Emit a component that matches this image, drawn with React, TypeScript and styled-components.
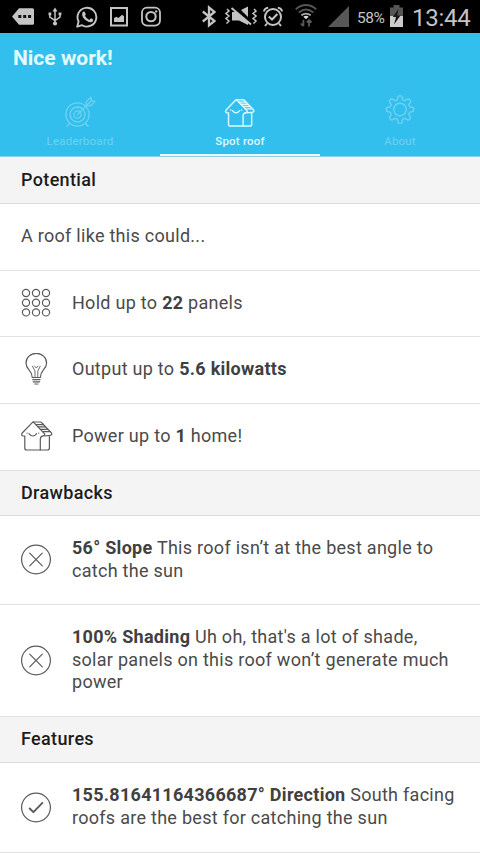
import React from "react";
import styled, { createGlobalStyle } from "styled-components";

const GlobalStyle = createGlobalStyle`
  * { box-sizing: border-box; }
  body { margin: 0; background: #fff; overflow: hidden; }
`;

const Screen = styled.div`
  width: 480px;
  height: 854px;
  overflow: hidden;
  background: #fff;
  font-family: Roboto, "Liberation Sans", sans-serif;
  color: #4a4a4a;
`;

const StatusBar = styled.div`
  display: flex;
  align-items: center;
  height: 33px;
  background: #000;
  color: #c4c4c4;
`;

const StatusIcon = styled.svg<{ $gap: number }>`
  flex: none;
  display: block;
  margin-left: ${(p) => p.$gap}px;
`;

const Battery = styled.span`
  width: 30px;
  margin-left: 8px;
  font-size: 15.5px;
  letter-spacing: -0.4px;
  white-space: nowrap;
  padding-top: 2px;
`;

const Clock = styled.span`
  margin-left: 9px;
  font-size: 24px;
  letter-spacing: -0.25px;
  padding-top: 3px;
`;

const AppBar = styled.header`
  display: flex;
  flex-direction: column;
  height: 124px;
  background: #33bfed;
  border-bottom: 1px solid #8fcfe6;
`;

const Title = styled.h1`
  margin: 0;
  padding: 13px 13px 0;
  height: 57px;
  font-size: 21px;
  line-height: 25px;
  font-weight: 700;
  color: #e2fbfd;
`;

const Tabs = styled.nav`
  display: grid;
  grid-template-columns: repeat(3, 1fr);
  flex: 1;
`;

const Tab = styled.div<{ $active?: boolean }>`
  display: flex;
  flex-direction: column;
  align-items: center;
  color: ${(p) => (p.$active ? "#dcfcff" : "#6ed2f0")};
  font-weight: ${(p) => (p.$active ? 500 : 400)};
  border-bottom: 2px solid ${(p) => (p.$active ? "#e4fcff" : "transparent")};
`;

const TabIcon = styled.svg`
  display: block;
  width: 32px;
  height: 36px;
  margin-top: 3px;
  fill: none;
  stroke: currentColor;
  stroke-linejoin: round;
  stroke-linecap: round;
`;

const TabLabel = styled.span`
  margin-top: 5px;
  font-size: 11.5px;
  line-height: 14px;
  letter-spacing: 0.2px;
`;

const SectionHeader = styled.h2<{ $height: number }>`
  display: flex;
  align-items: center;
  height: ${(p) => p.$height}px;
  margin: 0;
  padding: 0 21px 2px;
  background: #f4f4f4;
  border-bottom: 1px solid #dcdcdc;
  font-size: 18px;
  letter-spacing: 0.35px;
  font-weight: 500;
  color: #1c1c1c;
`;

const Row = styled.div<{ $height: number }>`
  display: flex;
  align-items: center;
  height: ${(p) => p.$height}px;
  padding: 0 20px 0 21px;
  border-bottom: 1.5px solid #e2e2e2;
`;

const RowIcon = styled.svg`
  flex: none;
  width: 32px;
  height: 32px;
  margin: 0 19px 2px 0;
  fill: none;
  stroke: #5a5a5a;
  stroke-width: 1.2;
  stroke-linejoin: round;
  stroke-linecap: round;
`;

const RowText = styled.p`
  margin: 0;
  padding-bottom: 1px;
  font-size: 18px;
  line-height: 22.7px;
  letter-spacing: 0.28px;
  white-space: nowrap;

  b {
    font-weight: 700;
    color: #404040;
  }
`;

const House = () => (
  <g>
    <path d="M3.8 15H2.2Q-.2 14.4 1.2 12L11 1.8Q12 .8 13.2 1H19.2Q20.2 1 21 2L30.4 11.8Q31.4 14 29.2 14.4L23.6 15M28.4 14.8V27Q28.4 29 26.4 29H5.8Q3.8 29 3.8 27V15" />
    <path d="M12.5 1.2 23.4 12.6Q24.6 14.4 22 14.8 19.3 15.4 19.3 18V29" />
    <path d="M14.8 3.6H22.2M17 5.9H24.4M19.3 8.3H26.7M21.5 10.7H29" />
    <path d="M8 12.6Q11.8 17.4 15.6 12.6M6 12h.2M17.6 12h.2" />
  </g>
);

const HouseIcon = () => (
  <RowIcon viewBox="0 -1 32 32"><House /></RowIcon>
);

const PanelsIcon = () => (
  <RowIcon viewBox="0 0 32 32">
    {[6, 15.7, 25.4].map((y) =>
      [5, 15, 25].map((x) => <circle key={`${x}-${y}`} cx={x} cy={y} r="3.6" />)
    )}
  </RowIcon>
);

const BulbIcon = () => (
  <RowIcon viewBox="0 0 32 32">
    <path d="M11.3 24.5Q11.3 20.5 8 16.8Q5 13.4 5 10A10.3 9.7 0 0 1 25.6 10Q25.6 13.4 22.4 16.8Q19.3 20.5 19.3 24.5Z" />
    <path d="M14 24V18L11.5 13.3M16.8 24V18L19.2 13.3M13.5 13l1.8 2 1.8-2" strokeWidth=".9" />
    <path d="M11.8 26.7H19M12.2 28.9H18.6M13.8 31H17" />
  </RowIcon>
);

const CrossIcon = () => (
  <RowIcon viewBox="0 0 32 32">
    <circle cx="15" cy="16.5" r="14.4" />
    <path d="m8.7 10.2 12.6 12.6m0-12.6L8.7 22.8" />
  </RowIcon>
);

const CheckIcon = () => (
  <RowIcon viewBox="0 0 32 32">
    <circle cx="15" cy="16.5" r="14.4" />
    <path d="m8.7 17.5 3.7 3.7 9-9.3" strokeWidth="1.9" />
  </RowIcon>
);

const StatusIcons = () => (
  <>
    <StatusIcon $gap={12} width="22" height="33" viewBox="0 0 22 33" fill="currentColor">
      <path d="M7 8.2H20.5Q22 8.2 22 9.7V23.3Q22 24.8 20.5 24.8H7L0 16.5Z" />
      <path d="M6.3 15h3v3h-3zM11.2 15h3v3h-3zM16.1 15h3v3h-3z" fill="#111" />
    </StatusIcon>
    <StatusIcon $gap={14} width="14" height="33" viewBox="0 0 14 33" fill="none" stroke="currentColor" strokeWidth="1.5">
      <path d="M7 10V23M1.8 14V17.2L7 20.5 12 17V14" />
      <path d="M7 7.5 9.5 11.5H4.5ZM.5 12.5H3.3V15.3H.5ZM10.6 12.5H13.4V15.3H10.6Z" fill="currentColor" stroke="none" />
      <circle cx="7" cy="23.5" r="2.1" fill="currentColor" stroke="none" />
    </StatusIcon>
    <StatusIcon $gap={14} width="22" height="33" viewBox="0 0 22 33" fill="none" stroke="currentColor" strokeWidth="1.9">
      <path d="M1.2 26.7 2.6 21.5A9.4 9.4 0 1 1 6.1 25.2Z" strokeLinejoin="round" />
      <path d="M6.4 12.4Q7.5 10.8 8.7 11.8L9.8 14.2Q9.8 15 8.9 15.8 10.5 18.7 13.3 19.9L14.6 18.4Q15.3 18.2 17.1 19.5 17.7 20.5 16.1 22 14 23 10.5 20.8 5.1 17.2 6.4 12.4Z" fill="currentColor" stroke="none" />
    </StatusIcon>
    <StatusIcon $gap={12} width="18" height="33" viewBox="0 0 18 33" fill="none" stroke="currentColor" strokeWidth="2">
      <path d="M1 8H17V25.5H1Z" />
      <path d="M4 22V18L6.5 16.8 8.3 18 12.2 14.7 14 16.2V22Z" fill="currentColor" stroke="none" />
    </StatusIcon>
    <StatusIcon $gap={13} width="20" height="33" viewBox="0 0 20 33" fill="none" stroke="currentColor" strokeWidth="1.8">
      <rect x="1" y="7.6" width="18" height="18" rx="5" />
      <circle cx="10" cy="16.6" r="4.7" strokeWidth="2" />
      <circle cx="15.2" cy="11.4" r="1.2" fill="currentColor" stroke="none" />
    </StatusIcon>
    <StatusIcon $gap={41} width="14" height="33" viewBox="0 0 14 33" fill="none" stroke="currentColor" strokeWidth="2.3">
      <path d="M.8 11.5 12.5 21 7 25.4V7.4L12.5 12 .8 21.5" />
    </StatusIcon>
    <StatusIcon $gap={9} width="32" height="33" viewBox="0 0 32 33" fill="none" stroke="currentColor" strokeWidth="1.5">
      <path d="m2 9 2 2-3 2.5L4 16l-3 2.5L4 21l-2.5 2.5M29 9l2 2-3 2.5 3 2.5-3 2.5 3 2.5-2.5 2.5" />
      <path d="M7 12H12L23 22V25L14 20.5H7ZM16 10 23 6.5V17Z" fill="currentColor" stroke="none" />
      <path d="M6.5 8 26 24.5" strokeWidth="2" />
    </StatusIcon>
    <StatusIcon $gap={6} width="20" height="33" viewBox="0 0 20 33" fill="none" stroke="currentColor" strokeWidth="2">
      <circle cx="10" cy="17" r="8" />
      <path d="M1 11.5Q1.4 8.2 5.2 7.8M19 11.5Q18.6 8.2 14.8 7.8M4 23.5 2 26M16 23.5 18 26M5.8 16.5 9 19.5 14.4 14" />
    </StatusIcon>
    <StatusIcon $gap={12} width="22" height="33" viewBox="0 0 22 33" fill="none" strokeWidth="1.8">
      <path d="M.7 9.2Q11 .8 21.3 9.2M3.7 12.5Q11 6.5 18.3 12.5" stroke="#555" />
      <path d="M6.3 15.3Q11 11.8 15.7 15.3" stroke="#aaa" />
      <path d="M8.3 16.8Q11 14.8 13.7 16.8L11 19.2Z" fill="#ddd" />
      <path d="M8.4 20V26M5.8 23.5 8.4 26.2M14 26.5V20M11.8 22.5 14 20 16.5 22.5" stroke="#5a5a5a" />
    </StatusIcon>
    <StatusIcon $gap={11} width="21" height="33" viewBox="0 0 21 33" fill="#575757">
      <path d="M21 6V27H0Z" />
    </StatusIcon>
  </>
);

const BatteryIcon = () => (
  <StatusIcon $gap={3} width="13" height="33" viewBox="0 0 13 33">
    <path d="M3.5 5H9.5V7.5H13V27H0V7.5H3.5Z" fill="#555" />
    <path d="M0 16H13V27H0Z" fill="#ccc" />
    <path d="M8.5 9 2.8 17H6L4 24.5 10.5 15.5H7.2Z" fill="#161616" />
  </StatusIcon>
);

const TargetIcon = () => (
  <TabIcon viewBox="0 0 32 36" strokeWidth="1.3">
    <circle cx="13.5" cy="21.5" r="11.6" />
    <circle cx="13.5" cy="21.5" r="7.5" />
    <circle cx="13.5" cy="21.5" r="3.6" />
    <path d="M13.5 21.5 25 10M22.3 12.7V8.6L26.8 4.2 27.6 7.6 31 8.4 26.6 12.7ZM25 10 27.6 7.6M5.4 30.5 3 33.2M21.6 30.5 24 33.2" />
  </TabIcon>
);

const gearPath = (() => {
  const points: string[] = [];
  const cx = 16;
  const cy = 16.5;
  for (let i = 0; i <= 96; i++) {
    const a = (i / 96) * Math.PI * 2;
    const r = 11.8 + 1.9 * Math.tanh(2.4 * Math.cos(8 * a));
    points.push(`${(cx + r * Math.sin(a)).toFixed(2)} ${(cy - r * Math.cos(a)).toFixed(2)}`);
  }
  return `M${points.join("L")}Z`;
})();

const GearIcon = () => (
  <TabIcon viewBox="0 0 32 36" strokeWidth="1.4">
    <path d={gearPath} />
    <circle cx="16" cy="16.5" r="6.3" />
  </TabIcon>
);

export default function App() {
  return (
    <Screen>
      <GlobalStyle />
      <StatusBar>
        <StatusIcons />
        <Battery>58%</Battery>
        <BatteryIcon />
        <Clock>13:44</Clock>
      </StatusBar>
      <AppBar>
        <Title>Nice work!</Title>
        <Tabs>
          <Tab>
            <TargetIcon />
            <TabLabel>Leaderboard</TabLabel>
          </Tab>
          <Tab $active>
            <TabIcon viewBox="-1 -6 34 38" strokeWidth="1.5"><House /></TabIcon>
            <TabLabel>Spot roof</TabLabel>
          </Tab>
          <Tab>
            <GearIcon />
            <TabLabel>About</TabLabel>
          </Tab>
        </Tabs>
      </AppBar>

      <SectionHeader $height={47}>Potential</SectionHeader>
      <Row $height={67}><RowText>A roof like this could...</RowText></Row>
      <Row $height={66}>
        <PanelsIcon />
        <RowText>Hold up to <b>22</b> panels</RowText>
      </Row>
      <Row $height={67}>
        <BulbIcon />
        <RowText>Output up to <b>5.6 kilowatts</b></RowText>
      </Row>
      <Row $height={67}>
        <HouseIcon />
        <RowText>Power up to <b>1</b> home!</RowText>
      </Row>
      <SectionHeader $height={45}>Drawbacks</SectionHeader>
      <Row $height={89}>
        <CrossIcon />
        <RowText><b>56° Slope</b> This roof isn’t at the best angle to<br />catch the sun</RowText>
      </Row>
      <Row $height={112}>
        <CrossIcon />
        <RowText><b>100% Shading</b> Uh oh, that's a lot of shade,<br />solar panels on this roof won’t generate much<br />power</RowText>
      </Row>
      <SectionHeader $height={46}>Features</SectionHeader>
      <Row $height={90}>
        <CheckIcon />
        <RowText><b>155.81641164366687° Direction</b> South facing<br />roofs are the best for catching the sun</RowText>
      </Row>
    </Screen>
  );
}
